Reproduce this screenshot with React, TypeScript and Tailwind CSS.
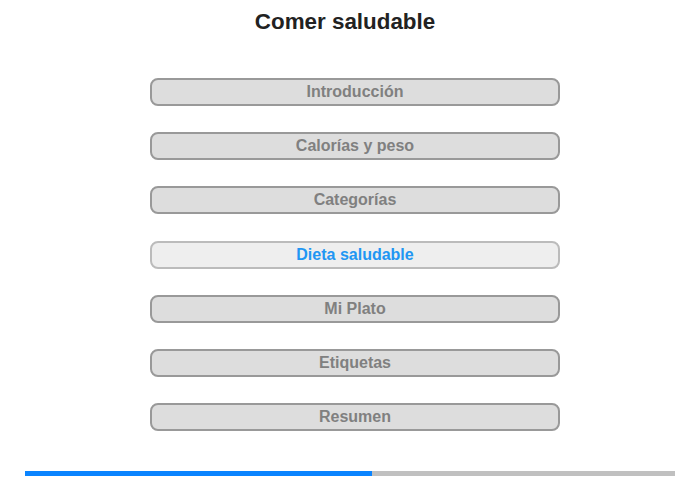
import React, { useState } from "react";

const sections = [
  "Introducción",
  "Calorías y peso",
  "Categorías",
  "Dieta saludable",
  "Mi Plato",
  "Etiquetas",
  "Resumen"
];

const App: React.FC = () => {
  const [active, setActive] = useState(3);

  return (
    <div
      className="w-[700px] h-[480px] bg-white flex flex-col"
      style={{ fontFamily: '"Liberation Sans", Arial, sans-serif' }}
    >
      <h1 className="mt-[9px] h-[26px] leading-[26px] w-[690px] text-center text-[22.4px] font-bold text-[#222]">
        Comer saludable
      </h1>

      <div className="mt-[43px] ml-[150px] flex flex-col gap-[26.2px]">
        {sections.map((title, i) => (
          <button
            key={title}
            onClick={() => setActive(i)}
            className={
              i === active
                ? "w-[410px] h-[28px] rounded-lg border-2 border-[#bbbbbb] bg-[#eeeeee] text-[16px] leading-none font-bold text-[#2196f3]"
                : "w-[410px] h-[28px] rounded-lg border-2 border-[#999999] bg-[#dddddd] text-[16px] leading-none font-bold text-[#808080]"
            }
          >
            {title}
          </button>
        ))}
      </div>

      <div className="mt-[40px] ml-[25px] w-[650px] h-[5px] bg-[#c0c0c0] flex">
        <div className="w-[347px] h-full bg-[#0a84ff]" />
      </div>
    </div>
  );
};

export default App;
